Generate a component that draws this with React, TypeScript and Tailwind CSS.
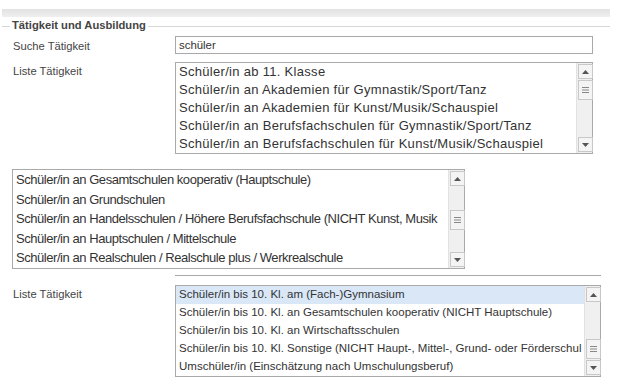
import React from "react";

const list1 = [
  "Schüler/in ab 11. Klasse",
  "Schüler/in an Akademien für Gymnastik/Sport/Tanz",
  "Schüler/in an Akademien für Kunst/Musik/Schauspiel",
  "Schüler/in an Berufsfachschulen für Gymnastik/Sport/Tanz",
  "Schüler/in an Berufsfachschulen für Kunst/Musik/Schauspiel",
];

const list2 = [
  "Schüler/in an Gesamtschulen kooperativ (Hauptschule)",
  "Schüler/in an Grundschulen",
  "Schüler/in an Handelsschulen / Höhere Berufsfachschule (NICHT Kunst, Musik",
  "Schüler/in an Hauptschulen / Mittelschule",
  "Schüler/in an Realschulen / Realschule plus / Werkrealschule",
];

const list3 = [
  "Schüler/in bis 10. Kl. am (Fach-)Gymnasium",
  "Schüler/in bis 10. Kl. an Gesamtschulen kooperativ (NICHT Hauptschule)",
  "Schüler/in bis 10. Kl. an Wirtschaftsschulen",
  "Schüler/in bis 10. Kl. Sonstige (NICHT Haupt-, Mittel-, Grund- oder Förderschul",
  "Umschüler/in (Einschätzung nach Umschulungsberuf)",
];

function Arrow({ down }: { down?: boolean }) {
  return (
    <div className="h-[15px] w-[15px] shrink-0 border border-[#c8c8c8] bg-[#f4f4f4] flex items-center justify-center">
      <svg width="7" height="4" viewBox="0 0 7 4">
        {down ? <path d="M0 0h7L3.5 4z" fill="#555" /> : <path d="M0 4h7L3.5 0z" fill="#555" />}
      </svg>
    </div>
  );
}

function Scrollbar({ thumbTop }: { thumbTop: number }) {
  return (
    <div className="flex flex-col w-[16px] shrink-0 bg-[#f0f0f0] border-l border-[#e2e2e2] p-px">
      <Arrow />
      <div className="relative flex-1">
        <div
          className="absolute left-0 h-[20px] w-[15px] border border-[#c8c8c8] bg-[#f4f4f4] flex items-center justify-center"
          style={{ top: thumbTop }}
        >
          <svg width="7" height="6" viewBox="0 0 7 6">
            <path d="M0 0.5h7M0 3h7M0 5.5h7" stroke="#888" strokeWidth="1" />
          </svg>
        </div>
      </div>
      <Arrow down />
    </div>
  );
}

function ListBox({
  items,
  rowH,
  text,
  thumbTop,
  selected,
  className,
}: {
  items: string[];
  rowH: string;
  text: string;
  thumbTop: number;
  selected?: number;
  className: string;
}) {
  return (
    <div className={`flex border border-[#a9a9a9] bg-white ${className}`}>
      <div className="flex-1 overflow-hidden">
        {items.map((it, i) => (
          <div
            key={i}
            className={`${rowH} ${text} pl-[3px] flex items-center whitespace-nowrap text-[#333] ${
              i === selected ? "bg-[#d9e7f7]" : ""
            }`}
          >
            {it}
          </div>
        ))}
      </div>
      <Scrollbar thumbTop={thumbTop} />
    </div>
  );
}

export default function App() {
  return (
    <div className="w-[620px] h-[392px] bg-white overflow-hidden font-[family-name:Liberation_Sans,Arial,sans-serif] text-[#333]">
      <div className="pt-[9px] pl-[2px]">
        <div className="h-[8px] w-[608px] bg-gradient-to-b from-[#e2e2e2] to-[#efefef]" />
      </div>

      <div className="mt-[3px] flex items-center h-[12px]">
        <div className="w-[8px] ml-[2px] h-px bg-[#d8d8d8]" />
        <div className="px-[2px] text-[11.2px] font-bold text-[#444] leading-none whitespace-nowrap">Tätigkeit und Ausbildung</div>
        <div className="flex-1 mr-[10px] h-px bg-[#d8d8d8]" />
      </div>

      <div className="mt-[4px] flex">
        <div className="w-[175px] pl-[13px] text-[11.2px] leading-[18px] pt-px text-[#444]">Suche Tätigkeit</div>
        <div className="w-[418px] h-[18px] border border-[#a9a9a9] text-[11.4px] leading-[16px] pl-[3px]">schüler</div>
      </div>

      <div className="mt-[7px] flex">
        <div className="w-[175px] pl-[13px] text-[11.2px] leading-[18px] text-[#444]">Liste Tätigkeit</div>
        <ListBox
          items={list1}
          rowH="h-[18px]"
          text="text-[13px] tracking-[0.3px]"
          thumbTop={1}
          className="w-[418px] h-[92px]"
        />
      </div>

      <div className="mt-[15px] pl-[12px]">
        <ListBox
          items={list2}
          rowH="h-[19.6px]"
          text="text-[13px] tracking-[-0.45px]"
          thumbTop={24}
          className="w-[453px] h-[100px]"
        />
      </div>

      <div className="mt-[6px] ml-[175px] w-[426px] h-px bg-[#a9a9a9]" />

      <div className="mt-[9px] flex">
        <div className="w-[175px] pl-[13px] text-[11.2px] leading-[18px] text-[#444]">Liste Tätigkeit</div>
        <ListBox
          items={list3}
          rowH="h-[18px]"
          text="text-[11.5px]"
          thumbTop={37}
          selected={0}
          className="w-[426px] h-[92px]"
        />
      </div>
    </div>
  );
}
